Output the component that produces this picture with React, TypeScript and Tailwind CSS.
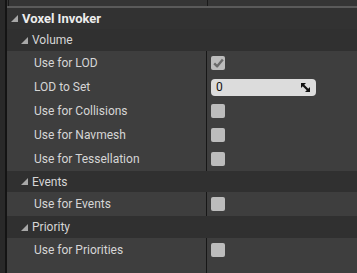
import React from 'react';

const Tri = () => (
  <svg width="7" height="7" viewBox="0 0 7 7" className="shrink-0">
    <polygon points="7,0 7,7 0,7" fill="#a8a8a8" />
  </svg>
);

const Check = ({ checked }: { checked?: boolean }) => (
  <div className="w-[14px] h-[14px] rounded-[2px] bg-[#bcbcbc] flex items-center justify-center">
    {checked && (
      <svg width="11" height="10" viewBox="0 0 11 10">
        <path d="M1.2 5.4 L4.2 8.3 L9.8 1.6" stroke="#6a6a6a" strokeWidth="2.4" fill="none" strokeLinejoin="round" />
      </svg>
    )}
  </div>
);

const Row = ({ label, children, h = 'h-[24px]' }: { label: string; children?: React.ReactNode; h?: string }) => (
  <div className={`flex ${h} bg-[#3e3e3e]`}>
    <div className="w-[199px] flex items-center pl-[27px] text-[12px] text-[#d6d6d6]">{label}</div>
    <div className="w-px bg-[#171717]" />
    <div className="flex-1 flex items-center pl-[4px]">{children}</div>
  </div>
);

const Category = ({ label, h = 'h-[21px]' }: { label: string; h?: string }) => (
  <div className={`flex items-center ${h} bg-[#303030] pl-[14px] gap-[4px] text-[12px] text-[#d6d6d6]`}>
    <Tri />
    <span>{label}</span>
  </div>
);

export default function App() {
  return (
    <div className="w-[357px] h-[273px] flex overflow-hidden bg-[#3e3e3e]" style={{ fontFamily: 'Roboto, "Liberation Sans", sans-serif' }}>
      <div className="w-[5px] bg-[#292929]" />
      <div className="w-[2px] bg-[#141414]" />
      <div className="flex-1 flex flex-col">
        <div className="h-[6px] bg-[#353535] flex">
          <div className="w-px ml-px bg-[#1a1a1a]" />
          <div className="w-[198px]" />
          <div className="w-px bg-[#1a1a1a]" />
        </div>
        <div className="h-[2px] bg-[#5a5a5a]" />
        <div className="h-[21px] bg-[#323232] flex items-center pl-[4px] gap-[4px]">
          <Tri />
          <span className="text-[13px] font-bold text-[#ececec]">Voxel Invoker</span>
        </div>
        <Category label="Volume" h="h-[22px]" />
        <Row label="Use for LOD"><Check checked /></Row>
        <Row label="LOD to Set">
          <div className="w-[105px] h-[17px] rounded-[4px] bg-[#dcdcdc] flex items-center justify-between pl-[5px] pr-[6px]">
            <span className="text-[12px] text-[#111]">0</span>
            <svg width="9" height="9" viewBox="0 0 9 9">
              <polygon points="0,0 5,0 0,5" fill="#111" />
              <polygon points="9,9 4,9 9,4" fill="#111" />
              <path d="M1.5 1.5 L7.5 7.5" stroke="#111" strokeWidth="2.2" />
            </svg>
          </div>
        </Row>
        <Row label="Use for Collisions"><Check /></Row>
        <Row label="Use for Navmesh"><Check /></Row>
        <Row label="Use for Tessellation"><Check /></Row>
        <Category label="Events" h="h-[21px]" />
        <Row label="Use for Events"><Check /></Row>
        <Category label="Priority" h="h-[22px]" />
        <Row label="Use for Priorities"><Check /></Row>
        <div className="flex-1 flex bg-[#3e3e3e]">
          <div className="w-[199px]" />
          <div className="w-px bg-[#171717]" />
        </div>
      </div>
    </div>
  );
}
